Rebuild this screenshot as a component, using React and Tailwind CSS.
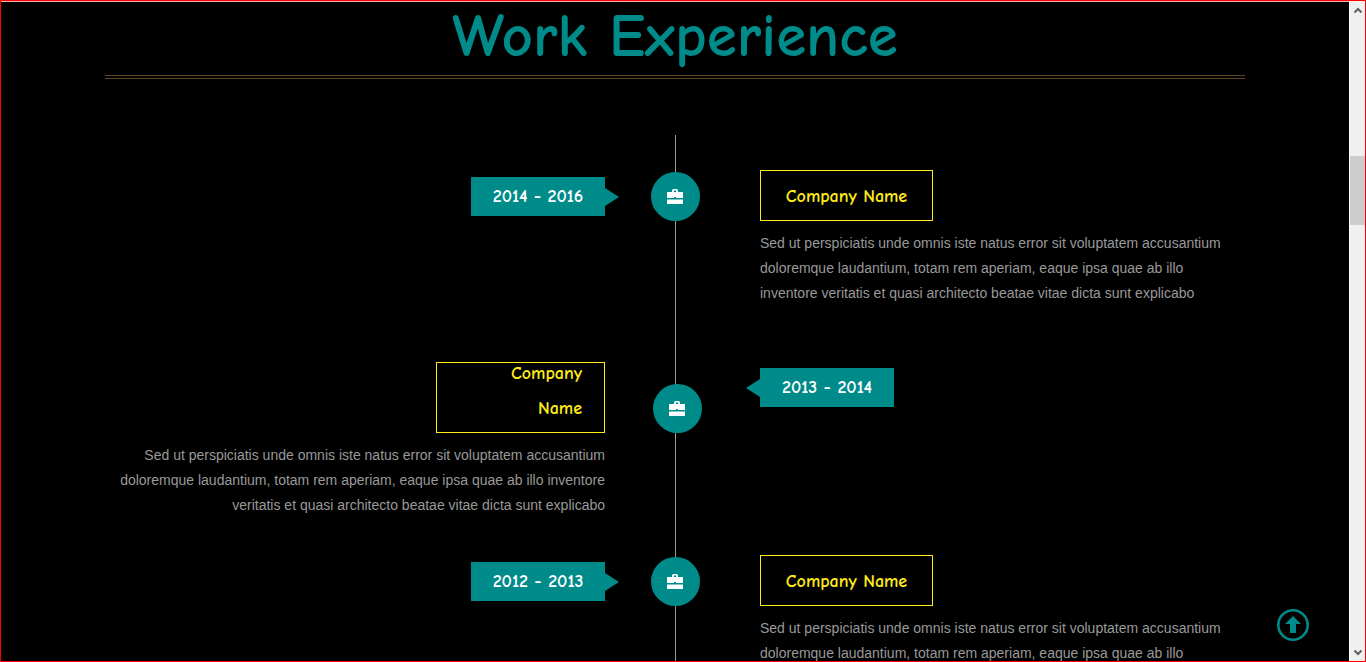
import React from "react";

const TEXT =
  "Sed ut perspiciatis unde omnis iste natus error sit voluptatem accusantium doloremque laudantium, totam rem aperiam, eaque ipsa quae ab illo inventore veritatis et quasi architecto beatae vitae dicta sunt explicabo";

const JOBS = [
  { years: "2014 - 2016", company: "Company Name", flipped: false },
  { years: "2013 - 2014", company: "Company Name", flipped: true },
  { years: "2012 - 2013", company: "Company Name", flipped: false },
];

const COMIC = "font-['Comic_Sans_MS','Comic_Neue','Open_Sans',sans-serif] font-bold";

function Briefcase() {
  return (
    <svg viewBox="0 0 16 15" className="h-[15px] w-4" fill="#fff" aria-hidden="true">
      <path
        fillRule="evenodd"
        d="M5 3V1.500Q5 0 6.500 0h3Q11 0 11 1.500V3h4.500q.5 0 .5.500V9H9V8H7v1H0V3.500Q0 3 .5 3ZM6.800 3h2.400V1.400h-2.400Z"
      />
      <path d="M0 10.600h16v3.900q0 .5-.5.500H.5q-.5 0-.5-.5Z" />
    </svg>
  );
}

function Years({ years, flipped }) {
  return (
    <div className={`flex items-center ${flipped ? "flex-row-reverse justify-end pt-[6px]" : "justify-end pt-[7px]"}`}>
      <span className={`${COMIC} flex h-[39px] min-w-[134px] items-center justify-center bg-[#008b8b] px-5 text-lg leading-6 text-white`}>
        {years}
      </span>
      <svg
        viewBox="0 0 14 18"
        className={`h-[18px] w-[14px] ${flipped ? "-ml-[14px] rotate-180" : "-mr-[14px]"}`}
        fill="#008b8b"
        aria-hidden="true"
      >
        <path d="M0 0 14 9 0 18Z" />
      </svg>
    </div>
  );
}

function Company({ company, flipped }) {
  return (
    <div className={flipped ? "flex flex-col items-end text-right" : ""}>
      {flipped ? (
        <h2 className={`${COMIC} h-[71px] w-[169px] border border-[#ffeb19] pr-[22px] pl-16 text-lg text-[#ffeb19]`}>
          <span className="-mt-[7px] block leading-[35px]">{company}</span>
        </h2>
      ) : (
        <h2 className={`${COMIC} flex h-[51px] w-[173px] items-center justify-center border border-[#ffeb19] pt-[2px] text-lg leading-[35px] text-[#ffeb19]`}>
          {company}
        </h2>
      )}
      <p className={`mt-[10px] font-['Liberation_Sans',Arial,sans-serif] text-sm leading-[25px] text-[#999] ${flipped ? "" : "pr-2"}`}>
        {TEXT}
      </p>
    </div>
  );
}

function Job({ job }) {
  const years = <Years years={job.years} flipped={job.flipped} />;
  const company = <Company company={job.company} flipped={job.flipped} />;
  return (
    <li className={`grid grid-cols-[1fr_140px_1fr] items-start ${job.flipped ? "min-h-[193px]" : "min-h-[192px]"}`}>
      {job.flipped ? company : years}
      <div className={`flex justify-center ${job.flipped ? "pt-[22px] pl-1" : "pt-[2px]"}`}>
        <span className="relative flex size-[49px] items-center justify-center rounded-full bg-[#008b8b]">
          <Briefcase />
        </span>
      </div>
      <div className="pl-[15px]">{job.flipped ? years : company}</div>
    </li>
  );
}

function ScrollBar() {
  return (
    <div className="flex w-4 shrink-0 flex-col items-center border-l border-white bg-[#f0f0f0]" aria-hidden="true">
      <svg viewBox="0 0 16 17" className="h-[17px] w-4" fill="none" stroke="#606060" strokeWidth="2">
        <path d="m4.500 11.500 3.500-3.500 3.500 3.500" />
      </svg>
      <div className="flex min-h-0 w-full flex-1 flex-col">
        <div className="h-[22%]" />
        <div className="h-[11%] bg-[#cdcdcd]" />
      </div>
      <svg viewBox="0 0 16 17" className="h-[17px] w-4" fill="none" stroke="#606060" strokeWidth="2">
        <path d="m4.500 6.500 3.500 3.500 3.500-3.500" />
      </svg>
    </div>
  );
}

export default function App() {
  return (
    <div className="flex h-screen overflow-hidden border border-[#ff0000] bg-black">
      <main className="relative min-w-0 flex-1 overflow-hidden border-t border-[#e8b8b8] px-[104px]">
        <h1 className={`${COMIC} border-b-4 border-double border-[#5c4426] pb-1 text-center text-[61px] leading-[69px] text-[#008b8b]`}>
          Work Experience
        </h1>
        <div className="relative mt-14 pt-[35px]">
          <div className="absolute inset-y-0 left-1/2 w-px bg-[#999]" />
          <ol>
            {JOBS.map((job) => (
              <Job key={job.years} job={job} />
            ))}
          </ol>
        </div>
        <a href="#top" aria-label="Back to top" className="absolute right-10 bottom-5">
          <svg viewBox="0 0 32 32" className="size-8" aria-hidden="true">
            <circle cx="16" cy="16" r="14.700" fill="none" stroke="#008b8b" strokeWidth="2.600" />
            <path d="M16 7 24 15H19V24H13V15H8Z" fill="#008b8b" />
          </svg>
        </a>
      </main>
      <ScrollBar />
    </div>
  );
}
